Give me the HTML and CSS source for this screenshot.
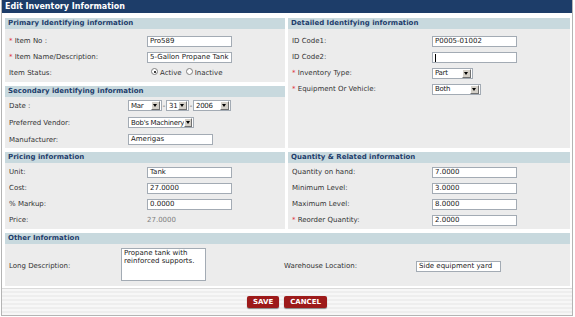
FILE: index.html
```html
<!DOCTYPE html>
<html lang="en">
<head>
    <meta charset="UTF-8">
    <title>Edit Inventory Information</title>
    <link rel="stylesheet" href="styles.css">
</head>
<body>
    <div class="window">
        <div class="titlebar">Edit Inventory Information</div>

        <div class="sections">
            <!-- primary -->
            <div class="panel primary">
                <h2>Primary Identifying information</h2>
                <div class="rows">
                    <div class="row"><label><span class="req">*</span> Item No :</label><span class="field">Pro589</span></div>
                    <div class="row"><label><span class="req">*</span> Item Name/Description:</label><span class="field">5-Gallon Propane Tank</span></div>
                    <div class="row"><label>Item Status:</label>
                        <span class="radios">
                            <span class="radio checked"></span><span class="rlabel">Active</span>
                            <span class="radio"></span><span class="rlabel">Inactive</span>
                        </span>
                    </div>
                </div>
            </div>

            <!-- detailed -->
            <div class="panel detailed">
                <h2>Detailed Identifying information</h2>
                <div class="rows">
                    <div class="row"><label>ID Code1:</label><span class="field">P0005-01002</span></div>
                    <div class="row"><label>ID Code2:</label><span class="field"><span class="caret"></span></span></div>
                    <div class="row"><label><span class="req">*</span> Inventory Type:</label><span class="select w-part"><span class="val">Part</span><span class="arrow"></span></span></div>
                    <div class="row"><label><span class="req">*</span> Equipment Or Vehicle:</label><span class="select w-both"><span class="val">Both</span><span class="arrow"></span></span></div>
                </div>
            </div>

            <!-- secondary -->
            <div class="panel secondary">
                <h2>Secondary identifying information</h2>
                <div class="rows">
                    <div class="row"><label>Date :</label>
                        <span class="select w-mon"><span class="val">Mar</span><span class="arrow"></span></span>
                        <span class="dash">-</span>
                        <span class="select w-day"><span class="val">31</span><span class="arrow"></span></span>
                        <span class="dash">-</span>
                        <span class="select w-year"><span class="val">2006</span><span class="arrow"></span></span>
                    </div>
                    <div class="row"><label>Preferred Vendor:</label><span class="select w-vendor"><span class="val">Bob's Machinery</span><span class="arrow"></span></span></div>
                    <div class="row"><label>Manufacturer:</label><span class="field">Amerigas</span></div>
                </div>
            </div>

            <!-- pricing -->
            <div class="panel pricing">
                <h2>Pricing information</h2>
                <div class="rows">
                    <div class="row"><label>Unit:</label><span class="field">Tank</span></div>
                    <div class="row"><label>Cost:</label><span class="field">27.0000</span></div>
                    <div class="row"><label>% Markup:</label><span class="field">0.0000</span></div>
                    <div class="row"><label>Price:</label><span class="static">27.0000</span></div>
                </div>
            </div>

            <!-- quantity -->
            <div class="panel quantity">
                <h2>Quantity &amp; Related information</h2>
                <div class="rows">
                    <div class="row"><label>Quantity on hand:</label><span class="field">7.0000</span></div>
                    <div class="row"><label>Minimum Level:</label><span class="field">3.0000</span></div>
                    <div class="row"><label>Maximum Level:</label><span class="field">8.0000</span></div>
                    <div class="row"><label><span class="req">*</span> Reorder Quantity:</label><span class="field">2.0000</span></div>
                </div>
            </div>

            <!-- other -->
            <div class="panel other">
                <h2>Other Information</h2>
                <div class="rows">
                    <div class="row tall">
                        <label>Long Description:</label>
                        <span class="textarea">Propane tank with reinforced supports.</span>
                        <label class="wh">Warehouse Location:</label>
                        <span class="field">Side equipment yard</span>
                    </div>
                </div>
            </div>
        </div>

        <div class="footer">
            <span class="btn">SAVE</span>
            <span class="btn">CANCEL</span>
        </div>
    </div>
</body>
</html>
```

FILE: styles.css
```css
body {
    margin: 0;
    font-family: "DejaVu Sans", Verdana, sans-serif;
    font-size: 7px;
    color: #333;
    background: #fff;
}
.window {
    width: 570px;
    margin-left: 1px;
    border: 1px solid #b4b4b4;
    border-top: 0;
}
.titlebar {
    height: 13px;
    line-height: 13px;
    padding-left: 3px;
    background: #1d3d69;
    color: #fff;
    font-weight: bold;
    font-size: 8px;
}
.sections {
    display: grid;
    grid-template-columns: 280px 282px;
    column-gap: 3px;
    row-gap: 4px;
    padding: 5px 2px 1px 3px;
}
.panel {
    background: #ececec;
}
.panel h2 {
    margin: 0;
    height: 11px;
    line-height: 11px;
    padding-left: 3px;
    background: #c8d9de;
    color: #1e3e6c;
    font-size: 7px;
    font-weight: bold;
}
.primary { grid-column: 1; grid-row: 1; }
.detailed { grid-column: 2; grid-row: 1 / 3; }
.secondary { grid-column: 1; grid-row: 2; }
.pricing { grid-column: 1; grid-row: 3; }
.quantity { grid-column: 2; grid-row: 3; }
.other { grid-column: 1 / 3; grid-row: 4; }

.rows {
    padding: 4px 0 1px 4px;
}
.secondary .rows { padding-top: 0; padding-bottom: 0; }
.pricing .rows, .quantity .rows { padding-top: 1px; padding-bottom: 1px; }
.other .rows { padding-top: 4px; padding-bottom: 2px; }

.row {
    display: flex;
    align-items: center;
    height: 16px;
}
.secondary .row { height: 17px; }
.row.tall { height: 36px; }

.row label {
    flex: none;
    width: 138px;
}
.secondary .row label { width: 119px; }
.detailed .row label,
.quantity .row label { width: 140px; }
.other .row label { width: 112px; }
.other .row label.wh { width: 132px; margin-left: 78px; }

.req {
    color: #e0303a;
}

.field {
    box-sizing: border-box;
    width: 85px;
    height: 11px;
    line-height: 9px;
    padding: 0 2px;
    border: 1px solid #a3abb4;
    background: #fff;
    color: #222;
    white-space: nowrap;
    overflow: hidden;
}
.caret {
    display: inline-block;
    width: 1px;
    height: 8px;
    margin-top: 1px;
    background: #000;
    vertical-align: top;
}
.static {
    color: #808080;
}
.textarea {
    box-sizing: border-box;
    width: 85px;
    height: 33px;
    padding: 0 2px;
    line-height: 8px;
    border: 1px solid #a3abb4;
    background: #fff;
    color: #222;
    align-self: flex-start;
}

/* dropdowns */
.select {
    box-sizing: border-box;
    display: flex;
    justify-content: space-between;
    align-items: center;
    height: 11px;
    border: 1px solid #a3abb4;
    background: #fff;
    color: #222;
}
.select .val {
    padding-left: 2px;
    white-space: nowrap;
    letter-spacing: -0.3px;
}
.select .arrow {
    position: relative;
    box-sizing: border-box;
    width: 9px;
    height: 9px;
    margin-right: 1px;
    background: #d4d0c8;
    border: 1px solid;
    border-color: #fff #707070 #707070 #fff;
}
.select .arrow::after {
    content: "";
    position: absolute;
    left: 1px;
    top: 2px;
    border-left: 2.5px solid transparent;
    border-right: 2.5px solid transparent;
    border-top: 3px solid #000;
}
.w-mon { width: 34px; }
.w-day { width: 23px; }
.w-year { width: 38px; }
.w-vendor { width: 66px; }
.w-part { width: 41px; }
.w-both { width: 49px; }
.dash {
    width: 4px;
    text-align: center;
}

/* radios */
.radios {
    display: flex;
    align-items: center;
    padding-left: 4px;
}
.radio {
    position: relative;
    box-sizing: border-box;
    width: 7px;
    height: 7px;
    margin-top: -3px;
    border-radius: 50%;
    border: 1px solid #808080;
    background: #fff;
}
.radio.checked::after {
    content: "";
    position: absolute;
    left: 1.5px;
    top: 1.5px;
    width: 2px;
    height: 2px;
    border-radius: 50%;
    background: #000;
}
.rlabel {
    margin: 0 4px 0 2px;
}

/* buttons */
.footer {
    display: flex;
    justify-content: center;
    align-items: center;
    gap: 5px;
    height: 26px;
    border-top: 1px solid #dadada;
    margin-top: 1px;
    background: repeating-linear-gradient(#f7f7f7 0, #f7f7f7 2px, #eeeeee 2px, #eeeeee 4px);
}
.btn {
    height: 12px;
    line-height: 12px;
    padding: 0 6px;
    border-radius: 2px;
    background: #9d1a1a;
    color: #fff;
    font-weight: bold;
    box-shadow: 0 1px 1px #888;
}
```
